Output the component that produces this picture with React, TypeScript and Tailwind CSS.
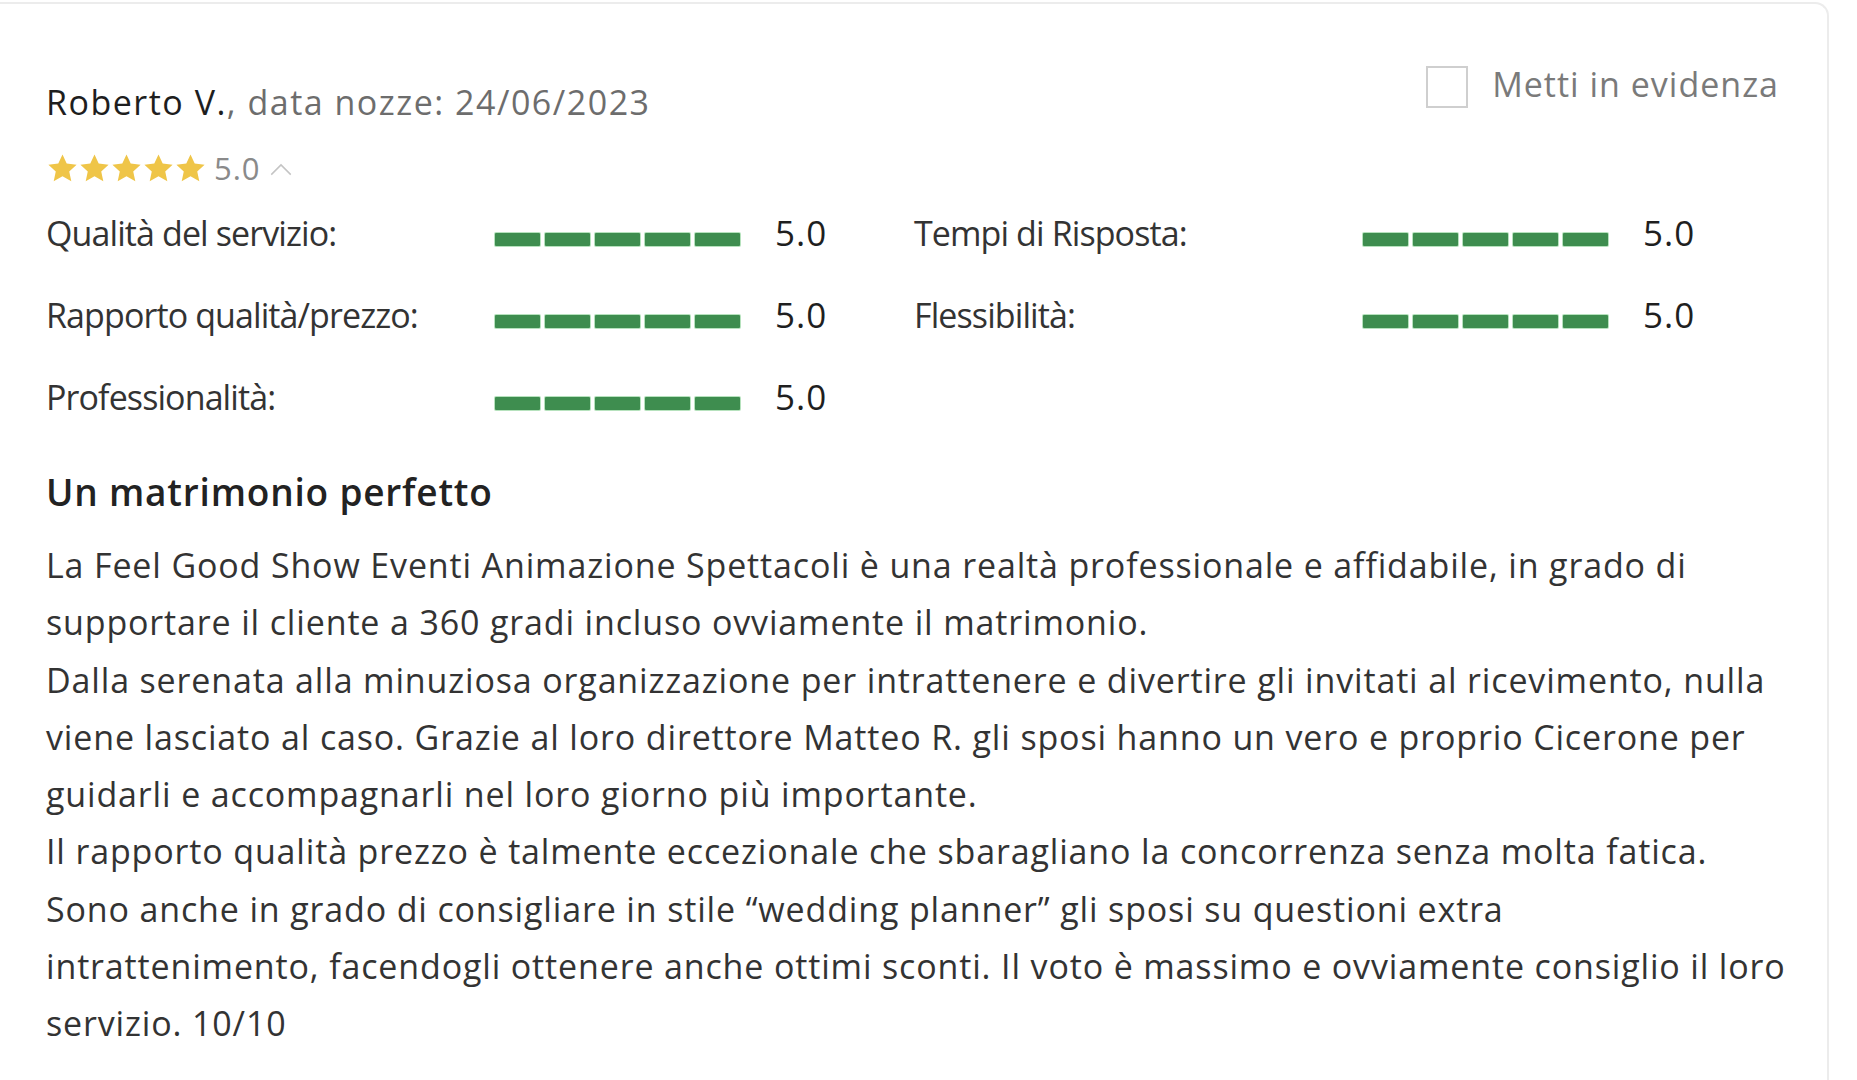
import React from 'react'

const ratingsLeft = [
  { label: 'Qualità del servizio:', value: '5.0' },
  { label: 'Rapporto qualità/prezzo:', value: '5.0' },
  { label: 'Professionalità:', value: '5.0' },
]

const ratingsRight = [
  { label: 'Tempi di Risposta:', value: '5.0' },
  { label: 'Flessibilità:', value: '5.0' },
]

const bodyLines = [
  'La Feel Good Show Eventi Animazione Spettacoli è una realtà professionale e affidabile, in grado di',
  'supportare il cliente a 360 gradi incluso ovviamente il matrimonio.',
  'Dalla serenata alla minuziosa organizzazione per intrattenere e divertire gli invitati al ricevimento, nulla',
  'viene lasciato al caso. Grazie al loro direttore Matteo R. gli sposi hanno un vero e proprio Cicerone per',
  'guidarli e accompagnarli nel loro giorno più importante.',
  'Il rapporto qualità prezzo è talmente eccezionale che sbaragliano la concorrenza senza molta fatica.',
  'Sono anche in grado di consigliare in stile “wedding planner” gli sposi su questioni extra',
  'intrattenimento, facendogli ottenere anche ottimi sconti. Il voto è massimo e ovviamente consiglio il loro',
  'servizio. 10/10',
]

function Star() {
  return (
    <svg viewBox="0 0 24 24" className="-mx-[0.5px] h-[33px] w-[33px]">
      <path
        d="M12 1.8l3.05 6.6 7.2.8-5.35 4.9 1.5 7.1L12 17.6l-6.4 3.6 1.5-7.1L1.75 9.2l7.2-.8z"
        fill="#efc548"
      />
    </svg>
  )
}

function Bar() {
  return (
    <div className="mt-[12px] flex gap-[5px]">
      {[0, 1, 2, 3, 4].map((i) => (
        <span
          key={i}
          className="h-[13px] w-[45px] rounded-[1px] bg-[#3e8d4f] shadow-[0_0_0_1px_#b6e2bd]"
        />
      ))}
    </div>
  )
}

function RatingRow({ label, value }: { label: string; value: string }) {
  return (
    <div className="flex h-[82px] items-center">
      <span className="w-[449px] tracking-[-0.9px] text-[#333]">{label}</span>
      <Bar />
      <span className="ml-[35px] text-[35px] tracking-[1px] text-[#1f1f1f]">{value}</span>
    </div>
  )
}

export default function App() {
  return (
    <div className="min-h-screen bg-white pt-[2px] font-['Open_Sans','Liberation_Sans',sans-serif] text-[34px] leading-[40px] text-[#333]">
      <div className="w-[1829px] rounded-tr-[14px] border-t-2 border-r-2 border-[#ececec] pb-10 pl-[46px] pr-[48px] pt-[56px]">
        <div className="flex items-start justify-between">
          <div className="mt-[22px]">
            <div className="tracking-[1.5px]">
              <span className="text-[#1e1e1e]">Roberto V.</span>
              <span className="text-[#6d6d6d]">, data nozze: 24/06/2023</span>
            </div>
            <div className="mt-[26px] flex items-center">
              <div className="flex">
                <Star />
                <Star />
                <Star />
                <Star />
                <Star />
              </div>
              <span className="ml-[8px] text-[31px] tracking-[1px] text-[#8a8a8a]">5.0</span>
              <svg viewBox="0 0 24 14" className="ml-[8px] mt-[2px] h-[13px] w-[24px]">
                <polyline points="1.5,12.5 12,2 22.5,12.5" fill="none" stroke="#c4c4c4" strokeWidth="1.6" />
              </svg>
            </div>
          </div>
          <label className="flex items-center">
            <span className="mt-[6px] h-[42px] w-[42px] border-2 border-[#cfcfcf] bg-white" />
            <span className="ml-[24px] tracking-[1px] text-[#7a7a7a]">Metti in evidenza</span>
          </label>
        </div>

        <div className="mt-[4px] grid grid-cols-[868px_1fr]">
          <div>
            {ratingsLeft.map((r) => (
              <RatingRow key={r.label} label={r.label} value={r.value} />
            ))}
          </div>
          <div>
            {ratingsRight.map((r) => (
              <RatingRow key={r.label} label={r.label} value={r.value} />
            ))}
          </div>
        </div>

        <h2 className="mt-[32px] text-[37px] font-semibold leading-[44px] tracking-[0.8px] text-[#222]">
          Un matrimonio perfetto
        </h2>

        <div className="mt-[23px] text-[34px] leading-[57.3px] tracking-[0.85px] text-[#333]">
          {bodyLines.map((line, i) => (
            <span key={i} className="block whitespace-nowrap">
              {line}
            </span>
          ))}
        </div>
      </div>
    </div>
  )
}
